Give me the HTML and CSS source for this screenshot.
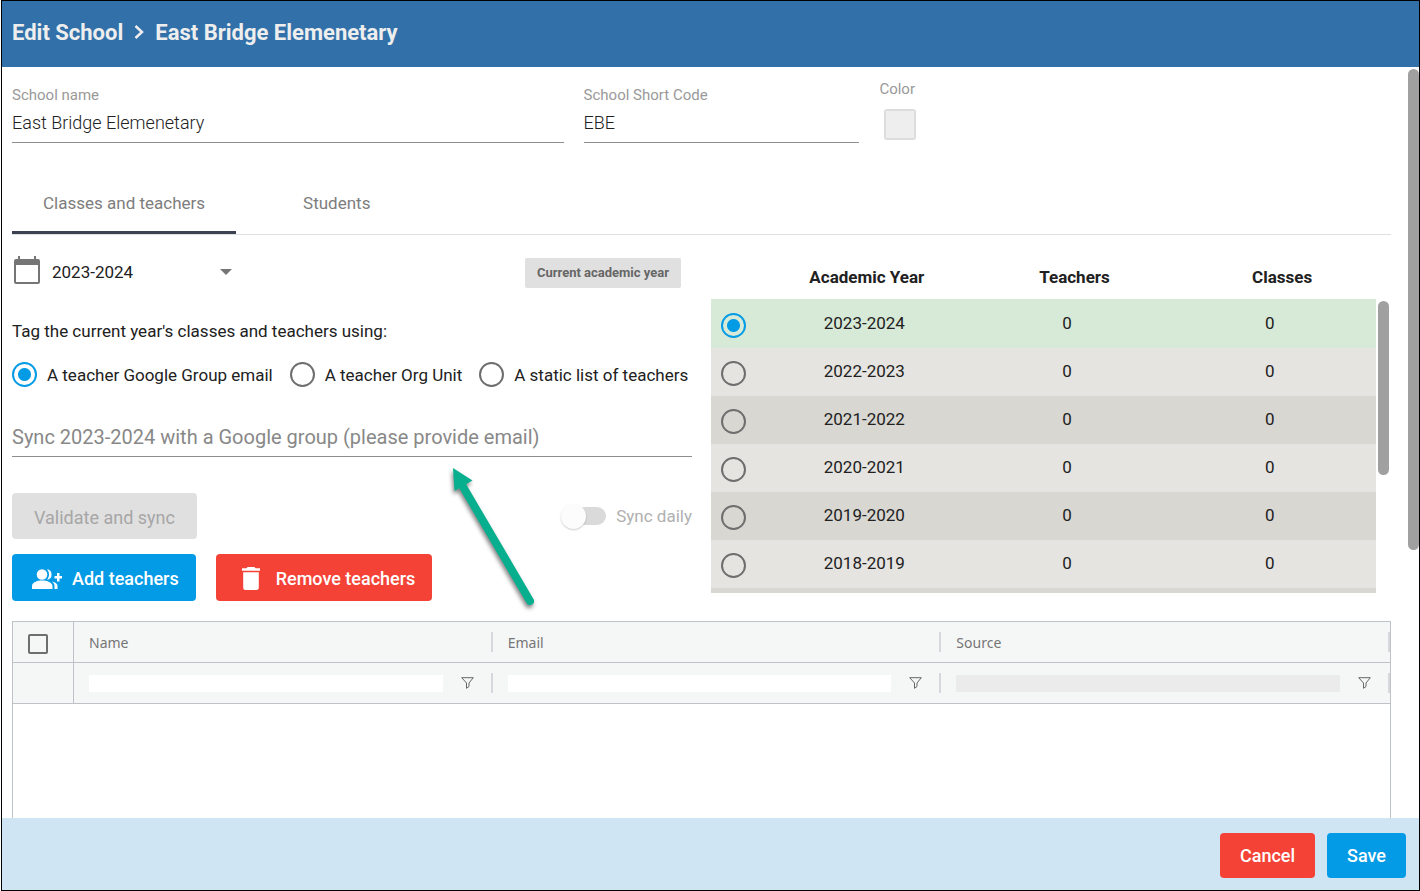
FILE: index.html
```html
<!DOCTYPE html>
<html lang="en">
<head>
	<meta charset="utf-8">
	<title>Edit School</title>
	<meta name="viewport" content="width=device-width, initial-scale=1">
	<link rel="stylesheet" href="styles.css">
</head>
<body>
<div class="dialog">

<header class="dialog-header">
	<h1>Edit School</h1>
	<svg class="chevron" viewBox="0 0 10 16"><path d="M1.500 2L8 8L1.500 14" /></svg>
	<h1>East Bridge Elemenetary</h1>
</header>

<main class="content">
	<section class="school-fields">
		<div class="field field-name">
			<label for="schoolname">School name</label>
			<input id="schoolname" name="schoolname" type="text" value="East Bridge Elemenetary">
		</div>
		<div class="field field-code">
			<label for="shortcode">School Short Code</label>
			<input id="shortcode" name="shortcode" type="text" value="EBE">
		</div>
		<div class="field-color">
			<label for="color">Color</label>
			<input id="color" name="color" type="color" value="#eeeeee">
		</div>
	</section>

	<nav class="tabs">
		<button type="button" class="tab active">Classes and teachers</button>
		<button type="button" class="tab">Students</button>
	</nav>

	<div class="columns">
		<section class="sync">
			<div class="year-row">
				<svg class="calendar" viewBox="0 0 26 28"><path d="M4 0h2v3h14V0h2v3h2a2 2 0 0 1 2 2v21a2 2 0 0 1-2 2H2a2 2 0 0 1-2-2V5a2 2 0 0 1 2-2h2zM2 9v17h22V9z" /></svg>
				<select name="year" aria-label="Academic year">
					<option>2023-2024</option>
					<option>2022-2023</option>
					<option>2021-2022</option>
				</select>
				<span class="badge">Current academic year</span>
			</div>
			<p class="tag-text">Tag the current year's classes and teachers using:</p>
			<div class="tag-options">
				<label><input type="radio" name="tagtype" checked>A teacher Google Group email</label>
				<label><input type="radio" name="tagtype">A teacher Org Unit</label>
				<label><input type="radio" name="tagtype">A static list of teachers</label>
			</div>
			<input class="group-email" type="email" name="groupemail" aria-label="Google group email" placeholder="Sync 2023-2024 with a Google group (please provide email)">
			<div class="validate-row">
				<button type="button" class="btn btn-disabled" disabled>Validate and sync</button>
				<label class="toggle"><input type="checkbox" name="syncdaily" disabled><span class="track"></span>Sync daily</label>
			</div>
			<div class="teacher-buttons">
				<button type="button" class="btn btn-blue">
					<svg class="icon-add" viewBox="0 0 30 20"><circle cx="10" cy="5.5" r="5.3" /><path d="M0 20v-3c0-3.500 5-5.500 10-5.500s10.500 2 10.500 5.500v3zM15 .3a5.300 5.300 0 0 1 0 10.500c2.700-3 2.700-7.500 0-10.500zM20 12.500c3.500.7 5.500 2.400 5.500 4.500v3h-3v-3c0-2-1-3.400-2.500-4.500zM25 4h2.500v3H30v2.500h-2.500v3H25v-3h-2.500V7H25z" /></svg>
					Add teachers
				</button>
				<button type="button" class="btn btn-red">
					<svg class="icon-trash" viewBox="0 0 18 23"><path d="M5.500 0h7l1 1.300H18v2.500H0V1.300h4.500zM1.200 5.300h15.600v15.200a2.500 2.500 0 0 1-2.500 2.500H3.700a2.500 2.500 0 0 1-2.500-2.500z" /></svg>
					Remove teachers
				</button>
			</div>
		</section>

		<section class="years">
			<table class="year-table">
				<thead>
					<tr><th></th><th>Academic Year</th><th>Teachers</th><th>Classes</th></tr>
				</thead>
				<tbody>
					<tr class="selected"><td><input type="radio" name="yearrow" aria-label="2023-2024" checked></td><td>2023-2024</td><td>0</td><td>0</td></tr>
					<tr><td><input type="radio" name="yearrow" aria-label="2022-2023"></td><td>2022-2023</td><td>0</td><td>0</td></tr>
					<tr><td><input type="radio" name="yearrow" aria-label="2021-2022"></td><td>2021-2022</td><td>0</td><td>0</td></tr>
					<tr><td><input type="radio" name="yearrow" aria-label="2020-2021"></td><td>2020-2021</td><td>0</td><td>0</td></tr>
					<tr><td><input type="radio" name="yearrow" aria-label="2019-2020"></td><td>2019-2020</td><td>0</td><td>0</td></tr>
					<tr><td><input type="radio" name="yearrow" aria-label="2018-2019"></td><td>2018-2019</td><td>0</td><td>0</td></tr>
					<tr class="cut"><td></td><td></td><td></td><td></td></tr>
				</tbody>
			</table>
			<div class="scroll-thumb years-thumb"></div>
		</section>
	</div>

	<table class="teacher-grid">
		<thead>
			<tr>
				<th class="check"><input type="checkbox" aria-label="Select all"></th>
				<th>Name</th>
				<th>Email</th>
				<th>Source</th>
			</tr>
			<tr>
				<td class="check"></td>
				<td><input type="text" aria-label="Filter name"><svg class="funnel" viewBox="0 0 13 12"><path d="M.7.7h11.600L8 6v3.500L5.500 11.300V6z" /></svg></td>
				<td><input type="text" aria-label="Filter email"><svg class="funnel" viewBox="0 0 13 12"><path d="M.7.7h11.600L8 6v3.500L5.500 11.300V6z" /></svg></td>
				<td><input type="text" aria-label="Filter source" disabled><svg class="funnel" viewBox="0 0 13 12"><path d="M.7.7h11.600L8 6v3.500L5.500 11.300V6z" /></svg></td>
			</tr>
		</thead>
	</table>

	<div class="scroll-thumb page-thumb"></div>
	<svg class="arrow" viewBox="0 0 100 150">
		<path class="shaft" d="M14 20L82 136" />
		<path class="head" d="M5 3L24.500 15.500L6.500 26z" />
	</svg>
</main>

<footer class="dialog-footer">
	<button type="button" class="btn btn-red">Cancel</button>
	<button type="button" class="btn btn-blue">Save</button>
</footer>

</div>
</body>
</html>
```
FILE: styles.css
```css
* {
  box-sizing: border-box;
}

body {
  margin: 0;
  background: #fff;
  color: #212121;
  font-family: Roboto, sans-serif;
  font-size: 17px;
}

input, select, button {
  font-family: inherit;
  font-size: inherit;
  color: inherit;
}

.dialog {
  display: flex;
  flex-direction: column;
  height: 100vh;
  margin-left: 1px;
  border: 1px solid #000;
}

.dialog-header {
  display: flex;
  align-items: center;
  gap: 11px;
  height: 66px;
  padding: 0 10px 4px;
  background: #3170a9;
  color: #eee;
}

.dialog-header h1 {
  margin: 0;
  font-size: 22px;
  font-weight: 700;
}

.chevron {
  width: 10px;
  height: 16px;
  fill: none;
  stroke: #eee;
  stroke-width: 2.5;
}

.content {
  position: relative;
  flex: 1;
  display: flex;
  flex-direction: column;
  min-height: 0;
  overflow: hidden;
  padding: 0 28px 0 10px;
}

/* school fields */
.school-fields {
  display: flex;
  gap: 20px;
}

.school-fields label {
  display: block;
  font-size: 15px;
  line-height: 18px;
  color: #999;
}

.field {
  padding-top: 19px;
}

.field-name {
  width: 40%;
}

.field-code {
  width: 20%;
}

.field input, .group-email {
  display: block;
  width: 100%;
  height: 39px;
  padding: 0;
  border: 0;
  border-bottom: 1px solid #8e8e8e;
  background: none;
  outline: 0;
}

.field input {
  padding-bottom: 2px;
  font-size: 18px;
  font-weight: 300;
}

.field-color {
  padding-top: 13px;
}

.field-color input {
  display: block;
  appearance: none;
  width: 32px;
  height: 31px;
  margin: 11px 5px 0;
  padding: 0;
  border: 2px solid #ddd;
  border-radius: 3px;
  background: #eee;
}

.field-color input::-webkit-color-swatch-wrapper {
  padding: 0;
}

.field-color input::-webkit-color-swatch {
  border: 0;
}

/* tabs */
.tabs {
  display: flex;
  gap: 36px;
  margin-top: 30px;
  border-bottom: 1px solid #e0e0e0;
}

.tab {
  height: 61px;
  padding: 2px 31px 0;
  border: 0;
  border-bottom: 3px solid transparent;
  background: none;
  color: #7d7d7d;
}

.tab.active {
  border-color: #3c4252;
}

.columns {
  display: grid;
  grid-template-columns: 1fr 1fr;
  gap: 19px;
}

/* sync settings */
.sync {
  padding-top: 21px;
}

.year-row {
  display: flex;
  align-items: center;
  height: 32px;
}

.calendar {
  width: 26px;
  height: 28px;
  margin: 0 12px 4px 2px;
  fill: #757575;
}

.year-row select {
  appearance: none;
  width: 180px;
  height: 32px;
  padding: 0;
  border: 0;
  background: url("data:image/svg+xml,%3Csvg xmlns='http://www.w3.org/2000/svg' width='12' height='6'%3E%3Cpath d='M0 0h12L6 6z' fill='%23757575'/%3E%3C/svg%3E") right center no-repeat;
}

.badge {
  margin: 2px 11px 0 auto;
  padding: 0 12px;
  border-radius: 2px;
  background: #e0e0e0;
  color: #666;
  font-size: 13px;
  font-weight: 700;
  line-height: 30px;
}

.tag-text {
  margin: 31px 0 0;
  line-height: 24px;
}

.tag-options {
  display: flex;
  gap: 17px;
  margin-top: 19px;
  white-space: nowrap;
}

.tag-options label {
  display: flex;
  align-items: center;
  gap: 10px;
}

input[type="radio"] {
  appearance: none;
  flex: none;
  width: 25px;
  height: 25px;
  margin: 0;
  border: 2px solid #6e6e6e;
  border-radius: 50%;
}

input[type="radio"]:checked {
  border-color: #039be5;
  background: radial-gradient(circle, #039be5 6px, transparent 7px);
}

.group-email {
  margin-top: 31px;
  font-size: 20px;
}

.group-email::placeholder {
  color: #888;
}

.validate-row {
  display: flex;
  align-items: center;
  justify-content: space-between;
  margin-top: 36px;
}

.btn {
  display: flex;
  align-items: center;
  border: 0;
  border-radius: 4px;
  color: #fff;
  font-size: 18px;
  font-weight: 500;
}

.btn-blue {
  background: #039be5;
}

.btn-red {
  background: #f44336;
}

.btn-disabled {
  height: 46px;
  padding: 2px 22px 0;
  background: #e0e0e0;
  color: #a6a6a6;
  font-weight: 400;
}

.toggle {
  display: flex;
  align-items: center;
  color: #b0b0b0;
}

.toggle input {
  appearance: none;
  width: 25px;
  height: 25px;
  margin: 0;
  border-radius: 50%;
  background: #fcfcfc;
  box-shadow: 0 1px 2px rgba(0, 0, 0, 0.2);
  z-index: 1;
}

.track {
  width: 30px;
  height: 18px;
  margin: 0 10px 0 -10px;
  border-radius: 9px;
  background: #dadada;
}

.teacher-buttons {
  display: flex;
  gap: 20px;
  margin-top: 15px;
}

.teacher-buttons .btn {
  height: 47px;
  padding: 2px 17px 0 20px;
  gap: 10px;
}

.icon-add {
  width: 30px;
  height: 20px;
  fill: #fff;
}

.icon-trash {
  width: 18px;
  height: 23px;
  margin: 0 6px;
  fill: #fff;
}

/* academic years */
.years {
  position: relative;
}

.year-table {
  display: block;
}

.year-table thead, .year-table tbody {
  display: block;
}

.year-table thead {
  padding: 20px 5px 0 0;
}

.year-table tbody {
  height: 294px;
  margin-right: 15px;
  overflow: hidden;
}

.year-table tr {
  display: grid;
  grid-template-columns: 52px 1fr 1fr 1fr;
  align-items: center;
  height: 48px;
  padding-right: 5px;
  background: #d8d7d2;
  text-align: center;
}

.year-table thead tr {
  height: 44px;
  padding-right: 0;
  background: none;
}

.year-table th {
  padding: 0;
}

.year-table td {
  padding: 0 0 2px;
}

.year-table td:first-child {
  display: flex;
  padding: 3px 0 0 10px;
}

.year-table tbody tr:nth-child(even) {
  background: #e5e4e0;
}

.year-table tbody .selected {
  height: 49px;
  background: #d7ead7;
}

.scroll-thumb {
  position: absolute;
  width: 11px;
  border-radius: 6px;
  background: #a0a0a0;
}

.years-thumb {
  top: 66px;
  right: 2px;
  height: 174px;
}

.page-thumb {
  top: 2px;
  right: 0;
  height: 481px;
}

/* teachers grid */
.teacher-grid {
  display: block;
  flex: 1;
  margin-top: 20px;
  border: 1px solid #bdc3c7;
  border-bottom: 0;
  font-family: "Noto Sans", sans-serif;
  font-size: 14px;
  color: #757575;
}

.teacher-grid thead {
  display: block;
}

.teacher-grid tr {
  display: grid;
  grid-template-columns: 61px 14fr 15fr 15fr;
  height: 41px;
  border-bottom: 1px solid #bdc3c7;
  background: #f5f7f7;
}

.teacher-grid th, .teacher-grid td {
  display: flex;
  align-items: center;
  padding: 0 19px 0 15px;
  background: linear-gradient(#d5d8dc, #d5d8dc) right center / 2px 20px no-repeat;
  font-weight: 400;
}

.teacher-grid .check {
  border-right: 1px solid #bdc3c7;
  background: none;
}

.teacher-grid input[type="text"] {
  flex: 1;
  min-width: 0;
  height: 17px;
  margin-right: 18px;
  padding: 0;
  border: 0;
  background: #fff;
}

.teacher-grid input[type="text"]:disabled {
  background: #ebebeb;
}

.teacher-grid input[type="checkbox"] {
  appearance: none;
  width: 20px;
  height: 20px;
  margin: 4px 0 0;
  border: 2px solid #6e6e6e;
  border-radius: 2px;
}

.funnel {
  width: 13px;
  height: 12px;
  fill: none;
  stroke: #666;
}

.arrow {
  position: absolute;
  left: 446px;
  top: 398px;
  width: 100px;
  height: 150px;
  filter: drop-shadow(-1px 3px 2px rgba(0, 0, 0, 0.5));
  pointer-events: none;
}

.arrow .shaft {
  stroke: #08af8f;
  stroke-width: 8;
  stroke-linecap: round;
}

.arrow .head {
  fill: #08af8f;
}

.dialog-footer {
  display: flex;
  align-items: center;
  justify-content: flex-end;
  gap: 12px;
  height: 72px;
  padding: 3px 13px 0;
  background: #cfe5f4;
}

.dialog-footer .btn {
  height: 45px;
  padding: 0 20px;
}
```
